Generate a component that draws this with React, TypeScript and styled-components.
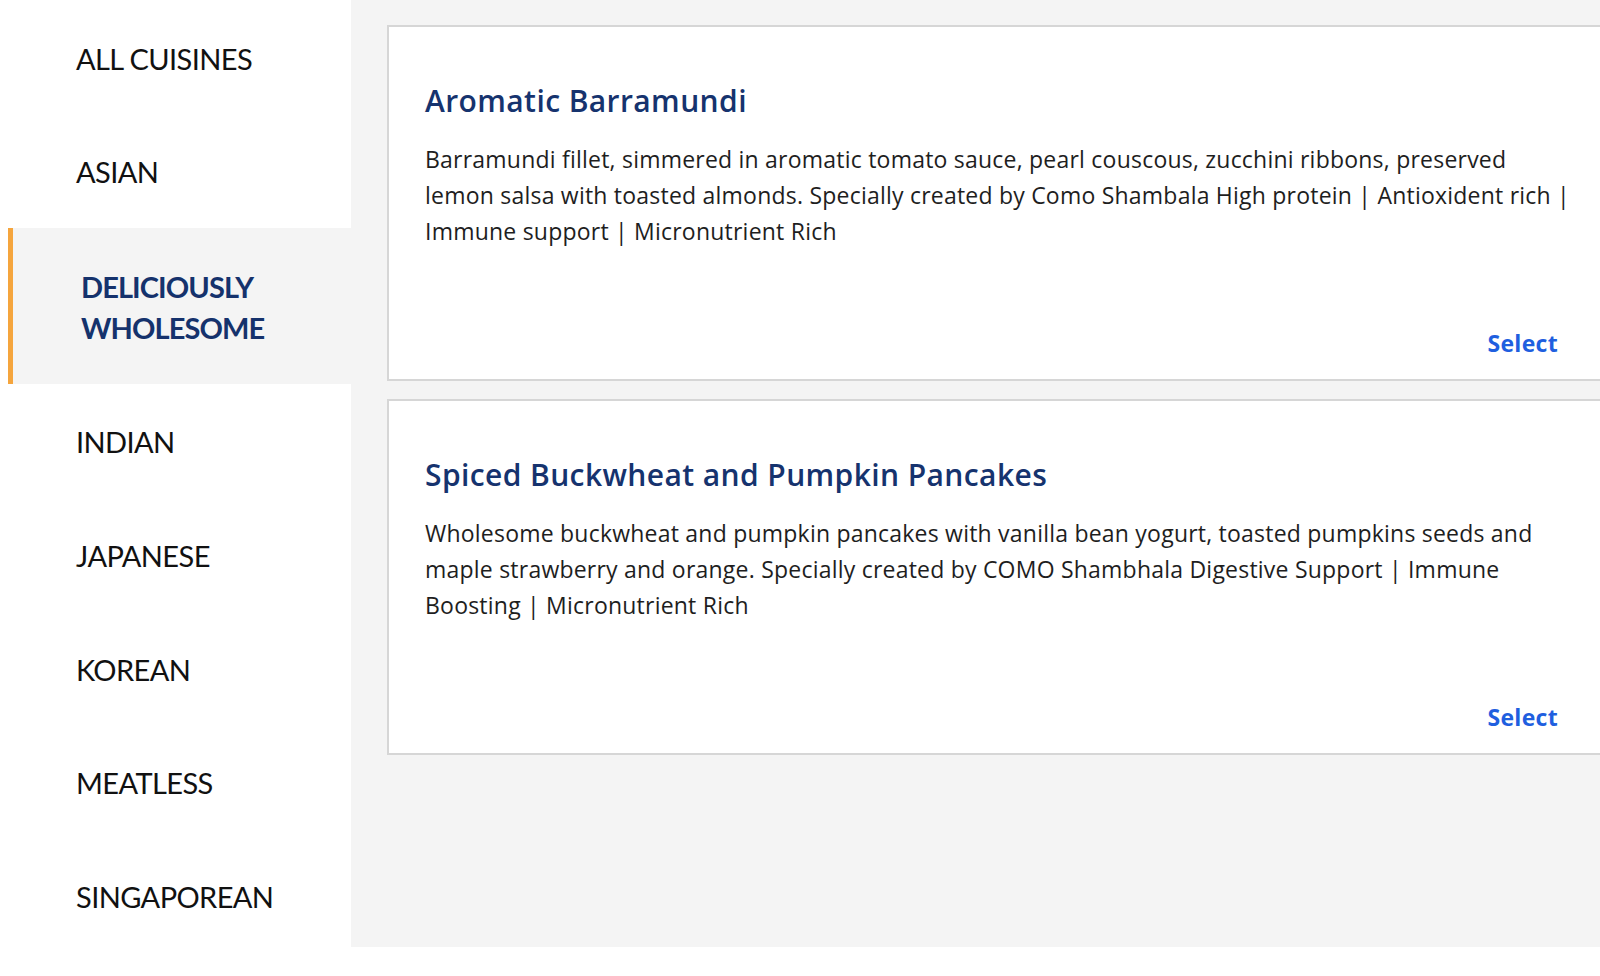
import React from "react";
import styled, { createGlobalStyle } from "styled-components";

const GlobalStyle = createGlobalStyle`
  html, body {
    margin: 0;
    padding: 0;
    background: #ffffff;
    overflow: hidden;
  }
  body {
    font-family: "Open Sans", "Lato", Arial, sans-serif;
  }
`;

const Page = styled.div`
  display: flex;
  align-items: flex-start;
  width: 100%;
`;

const Sidebar = styled.nav`
  width: 351px;
  flex: 0 0 351px;
  box-sizing: border-box;
  padding-left: 8px;
  display: flex;
  flex-direction: column;
`;

const NavItem = styled.div<{ $active?: boolean }>`
  box-sizing: border-box;
  padding: ${(p) => (p.$active ? "38px 0 36px 68px" : "37.5px 0 35.3px 68px")};
  border-left: 5px solid ${(p) => (p.$active ? "#f5a53d" : "transparent")};
  margin-left: ${(p) => (p.$active ? "0" : "-5px")};
  background: ${(p) => (p.$active ? "#f4f4f4" : "transparent")};
  font-family: "Lato", "Open Sans", Arial, sans-serif;
  font-size: 29px;
  line-height: 41px;
  font-weight: ${(p) => (p.$active ? 700 : 400)};
  color: ${(p) => (p.$active ? "#15326c" : "#111111")};
  text-transform: uppercase;
  letter-spacing: ${(p) => (p.$active ? "-0.9px" : "-0.6px")};
`;

const Main = styled.main`
  flex: 1 1 auto;
  align-self: flex-start;
  min-height: 947px;
  background: #f4f4f4;
  box-sizing: border-box;
  padding: 25px 0 0 36px;
  display: flex;
  flex-direction: column;
  gap: 18px;
  overflow: hidden;
`;

const Card = styled.article`
  box-sizing: border-box;
  width: 1260px;
  height: 356px;
  background: #ffffff;
  border: 2px solid #d6d6d6;
  padding: 55.5px 36px 18px 36px;
  display: flex;
  flex-direction: column;
`;

const Title = styled.h2`
  margin: 0;
  font-size: 30px;
  line-height: 36px;
  font-weight: 600;
  color: #16336e;
  letter-spacing: 0.4px;
`;

const Description = styled.p`
  margin: 22px 0 0 0;
  font-size: 23px;
  line-height: 36px;
  font-weight: 400;
  color: #1e1e1e;
  letter-spacing: 0.22px;
  white-space: nowrap;
`;

const Line = styled.span`
  display: block;
`;

const Footer = styled.div`
  margin-top: auto;
  width: 1146px;
  display: flex;
  justify-content: flex-end;
`;

const SelectButton = styled.button`
  border: none;
  background: none;
  padding: 0 13px 0 0;
  font-family: inherit;
  font-size: 23px;
  line-height: 36px;
  font-weight: 700;
  letter-spacing: 0.3px;
  color: #1f5fdf;
  cursor: pointer;
`;

const cuisines = [
  "All Cuisines",
  "Asian",
  "Deliciously Wholesome",
  "Indian",
  "Japanese",
  "Korean",
  "Meatless",
  "Singaporean",
];

const dishes = [
  {
    title: "Aromatic Barramundi",
    lines: [
      "Barramundi fillet, simmered in aromatic tomato sauce, pearl couscous, zucchini ribbons, preserved",
      "lemon salsa with toasted almonds. Specially created by Como Shambala High protein | Antioxident rich |",
      "Immune support | Micronutrient Rich",
    ],
  },
  {
    title: "Spiced Buckwheat and Pumpkin Pancakes",
    lines: [
      "Wholesome buckwheat and pumpkin pancakes with vanilla bean yogurt, toasted pumpkins seeds and",
      "maple strawberry and orange. Specially created by COMO Shambhala Digestive Support | Immune",
      "Boosting | Micronutrient Rich",
    ],
  },
];

export default function App() {
  return (
    <>
      <GlobalStyle />
      <Page>
        <Sidebar>
          {cuisines.map((c) => {
            const active = c === "Deliciously Wholesome";
            return (
              <NavItem key={c} $active={active}>
                {active ? (
                  <>
                    <Line>Deliciously</Line>
                    <Line>Wholesome</Line>
                  </>
                ) : (
                  c
                )}
              </NavItem>
            );
          })}
        </Sidebar>
        <Main>
          {dishes.map((d) => (
            <Card key={d.title}>
              <Title>{d.title}</Title>
              <Description>
                {d.lines.map((l) => (
                  <Line key={l}>{l}</Line>
                ))}
              </Description>
              <Footer>
                <SelectButton>Select</SelectButton>
              </Footer>
            </Card>
          ))}
        </Main>
      </Page>
    </>
  );
}
